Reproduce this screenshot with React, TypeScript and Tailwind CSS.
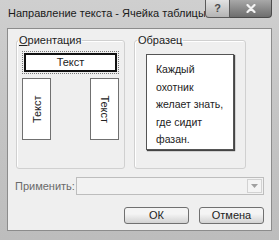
import React from 'react';

const font = { fontFamily: '"Liberation Sans", "Noto Sans", sans-serif' };

function TitleBar() {
  return (
    <div className="flex h-[28px] items-start">
      <div className="flex h-[26px] min-w-0 flex-1 items-center overflow-hidden whitespace-nowrap pl-[1px] text-[11px] text-[#1a1a1a]">
        Направление текста - Ячейка таблицы
      </div>
      <div className="flex h-[18px] shrink-0">
        <div className="flex w-[25px] items-center justify-center rounded-bl-[4px] border border-t-0 border-[#5a5a5a] bg-gradient-to-b from-[#e2e2e2] to-[#b4b4b4] text-[11px] font-bold text-[#4a4a4a]">
          ?
        </div>
        <div className="flex w-[42px] items-center justify-center rounded-br-[4px] border border-l-0 border-t-0 border-[#4a4a4a] bg-gradient-to-b from-[#a8a8a8] to-[#6e6e6e]">
          <svg width="10" height="9" viewBox="0 0 10 9">
            <path d="M1.5 1 L8.5 8 M8.5 1 L1.5 8" stroke="#f4f4f4" strokeWidth="2.2" strokeLinecap="round" />
          </svg>
        </div>
      </div>
    </div>
  );
}

function VerticalBox({ dir }: { dir: 'up' | 'down' }) {
  return (
    <div className="flex h-[62px] w-[29px] items-center justify-center border border-[#707070] bg-white">
      <span
        className={
          dir === 'up'
            ? '-rotate-90 whitespace-nowrap text-[11px] text-[#222]'
            : 'rotate-90 whitespace-nowrap text-[11px] text-[#222]'
        }
      >
        Текст
      </span>
    </div>
  );
}

function Orientation() {
  return (
    <fieldset className="h-[135px] w-[109px] rounded-[3px] border border-[#d0d0d0] shadow-[inset_1px_1px_0_#fff]">
      <legend className="ml-[1px] px-[1px] text-[11px] leading-[12px] text-[#222]">
        <span className="underline">О</span>риентация
      </legend>
      <div className="flex flex-col gap-[4px] pl-[5px] pt-[5px]">
        <div className="w-[97px] border border-dotted border-[#777] p-px">
          <div className="flex h-[19px] items-center justify-center border-2 border-[#111] bg-white text-[11px] text-[#222]">
            Текст
          </div>
        </div>
        <div className="flex w-[97px] justify-between">
          <VerticalBox dir="up" />
          <VerticalBox dir="down" />
        </div>
      </div>
    </fieldset>
  );
}

function Sample() {
  return (
    <fieldset className="h-[135px] w-[112px] rounded-[3px] border border-[#d0d0d0] shadow-[inset_1px_1px_0_#fff]">
      <legend className="ml-[2px] px-[1px] text-[11px] leading-[12px] text-[#222]">Образец</legend>
      <div className="pl-[11px] pt-[8px]">
        <div className="h-[96px] w-[88px] border border-[#555] bg-white pl-[9px] pt-[6px] text-[10.5px] leading-[17.5px] text-[#222] shadow-[1px_1px_1px_#444]">
          <div>Каждый</div>
          <div>охотник</div>
          <div>желает знать,</div>
          <div>где сидит</div>
          <div>фазан.</div>
        </div>
      </div>
    </fieldset>
  );
}

function Button({ label }: { label: string }) {
  return (
    <div className="flex h-[17px] w-[65px] items-center justify-center rounded-[3px] border border-[#707070] bg-gradient-to-b from-[#f4f4f4] from-40% to-[#d2d2d2] text-[11px] text-[#222]">
      {label}
    </div>
  );
}

export default function App() {
  return (
    <div
      className="flex h-[240px] w-[279px] flex-col bg-gradient-to-b from-[#cfcfcf] via-[#c4c4c4] to-[#bdbdbd] px-[7px] pb-[9px]"
      style={font}
    >
      <TitleBar />
      <div className="flex flex-1 flex-col border border-[#8c8c8c] bg-[#efefef] px-[7px] pt-[5px]">
        <div className="flex gap-[9px] pl-[1px]">
          <Orientation />
          <Sample />
        </div>
        <div className="mt-[8px] flex items-center">
          <span className="w-[61px] text-[11px] text-[#6a6a6a]">Применить:</span>
          <div className="flex h-[18px] flex-1 justify-end border border-[#bdbdbd] bg-[#f2f2f2]">
            <div className="m-px flex w-[15px] items-center justify-center border border-[#d2d2d2] bg-[#f4f4f4]">
              <svg width="7" height="4" viewBox="0 0 7 4">
                <path d="M0 0 H7 L3.5 4 Z" fill="#a0a0a0" />
              </svg>
            </div>
          </div>
        </div>
        <div className="mt-[12px] flex justify-end gap-[10px]">
          <Button label="ОК" />
          <Button label="Отмена" />
        </div>
      </div>
    </div>
  );
}
